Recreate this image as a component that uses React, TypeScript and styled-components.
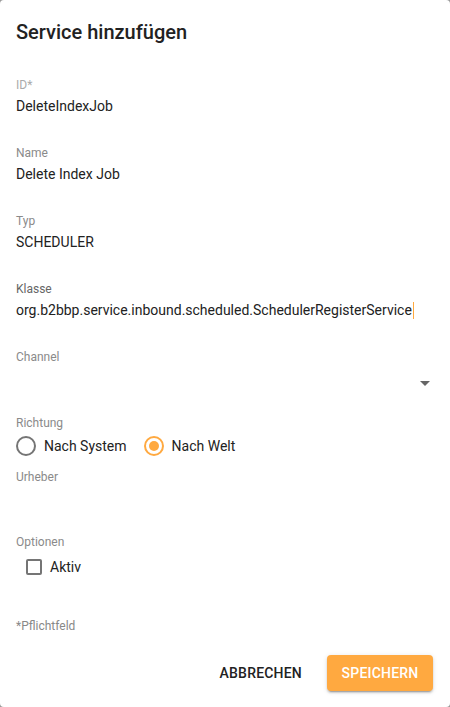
import styled, { createGlobalStyle } from 'styled-components';

const GlobalStyle = createGlobalStyle`
  html, body {
    margin: 0;
    padding: 0;
    background: #9a9a9a;
    font-family: Roboto, 'Noto Sans', Arial, sans-serif;
  }
`;

const SDialog = styled.div`
  width: 450px;
  height: 707px;
  box-sizing: border-box;
  background: #fff;
  border-radius: 4px;
  display: flex;
  flex-direction: column;
  color: #222;
`;
const STitle = styled.h2`
  margin: 0;
  padding: 16px 16px 0;
  font-size: 20px;
  font-weight: 500;
  line-height: 32px;
  color: #222;
`;
const SForm = styled.div`
  display: flex;
  flex-direction: column;
  padding: 0 16px;
`;
const SField = styled.div<{ $top: number }>`
  display: flex;
  flex-direction: column;
  margin-top: ${({ $top }) => $top}px;
`;
const SLabel = styled.label<{ $tone?: 'light' | 'dark' }>`
  font-size: 12px;
  line-height: 16px;
  color: ${({ $tone }) =>
    $tone === 'light' ? '#aaa' : $tone === 'dark' ? '#666' : '#8a8a8a'};
`;
const SValue = styled.div`
  margin-top: 3px;
  font-size: 14px;
  line-height: 20px;
  min-height: 20px;
  color: #222;
  white-space: nowrap;
  display: flex;
  align-items: center;
`;
const SCaret = styled.span`
  display: inline-block;
  width: 1px;
  height: 17px;
  background: #ffa940;
  margin-left: 1px;
`;
const SSelect = styled.div`
  height: 36px;
  display: flex;
  align-items: center;
  justify-content: flex-end;
  padding-right: 4px;
`;
const SArrow = styled.span`
  width: 0;
  height: 0;
  border-left: 5px solid transparent;
  border-right: 5px solid transparent;
  border-top: 5px solid #666;
  margin-top: 1px;
`;
const SRadioGroup = styled.div`
  margin-top: 3px;
  height: 24px;
  display: flex;
  align-items: center;
  gap: 17px;
`;
const SOption = styled.span`
  display: flex;
  align-items: center;
  gap: 8px;
  font-size: 14px;
  color: #222;
`;
const SRadio = styled.span<{ $checked?: boolean }>`
  width: 20px;
  height: 20px;
  box-sizing: border-box;
  border-radius: 50%;
  border: 2px solid ${({ $checked }) => ($checked ? '#ffa940' : '#757575')};
  display: flex;
  align-items: center;
  justify-content: center;
  &::after {
    content: '';
    width: 10px;
    height: 10px;
    border-radius: 50%;
    background: ${({ $checked }) => ($checked ? '#ffa940' : 'transparent')};
  }
`;
const SCheckRow = styled.div`
  margin-top: 5px;
  height: 24px;
  display: flex;
  align-items: center;
  padding-left: 10px;
`;
const SCheckbox = styled.span`
  width: 16px;
  height: 16px;
  box-sizing: border-box;
  border: 2px solid #757575;
  border-radius: 2px;
`;
const SHint = styled.div`
  margin-top: 39px;
  font-size: 12px;
  line-height: 16px;
  color: #888;
`;
const SActions = styled.div`
  margin-top: auto;
  padding: 0 17px 16px;
  display: flex;
  justify-content: flex-end;
  align-items: center;
  gap: 17px;
`;
const SButton = styled.button<{ $primary?: boolean }>`
  height: 36px;
  padding: 0 ${({ $primary }) => ($primary ? '14px' : '8px')};
  min-width: ${({ $primary }) => ($primary ? '106px' : '64px')};
  border: none;
  border-radius: 4px;
  font-family: inherit;
  font-size: 14px;
  font-weight: 500;
  letter-spacing: 0.2px;
  text-transform: uppercase;
  color: ${({ $primary }) => ($primary ? '#fff' : '#222')};
  background: ${({ $primary }) => ($primary ? '#ffa940' : 'transparent')};
  box-shadow: ${({ $primary }) =>
    $primary
      ? '0 3px 1px -2px rgba(0,0,0,0.2), 0 2px 2px 0 rgba(0,0,0,0.14), 0 1px 5px 0 rgba(0,0,0,0.12)'
      : 'none'};
`;

const App = () => {
  return (
    <SDialog>
      <GlobalStyle />
      <STitle>Service hinzufügen</STitle>
      <SForm>
        <SField $top={29}>
          <SLabel $tone="light">ID*</SLabel>
          <SValue>DeleteIndexJob</SValue>
        </SField>
        <SField $top={29}>
          <SLabel>Name</SLabel>
          <SValue>Delete Index Job</SValue>
        </SField>
        <SField $top={29}>
          <SLabel>Typ</SLabel>
          <SValue>SCHEDULER</SValue>
        </SField>
        <SField $top={29}>
          <SLabel $tone="dark">Klasse</SLabel>
          <SValue>
            org.b2bbp.service.inbound.scheduled.SchedulerRegisterService
            <SCaret />
          </SValue>
        </SField>
        <SField $top={29}>
          <SLabel>Channel</SLabel>
          <SSelect>
            <SArrow />
          </SSelect>
        </SField>
        <SField $top={14}>
          <SLabel>Richtung</SLabel>
          <SRadioGroup>
            <SOption>
              <SRadio />
              Nach System
            </SOption>
            <SOption>
              <SRadio $checked />
              Nach Welt
            </SOption>
          </SRadioGroup>
        </SField>
        <SField $top={11}>
          <SLabel>Urheber</SLabel>
          <SValue />
        </SField>
        <SField $top={26}>
          <SLabel>Optionen</SLabel>
          <SCheckRow>
            <SOption>
              <SCheckbox />
              Aktiv
            </SOption>
          </SCheckRow>
        </SField>
        <SHint>*Pflichtfeld</SHint>
      </SForm>
      <SActions>
        <SButton>Abbrechen</SButton>
        <SButton $primary>Speichern</SButton>
      </SActions>
    </SDialog>
  );
};

export default App;
